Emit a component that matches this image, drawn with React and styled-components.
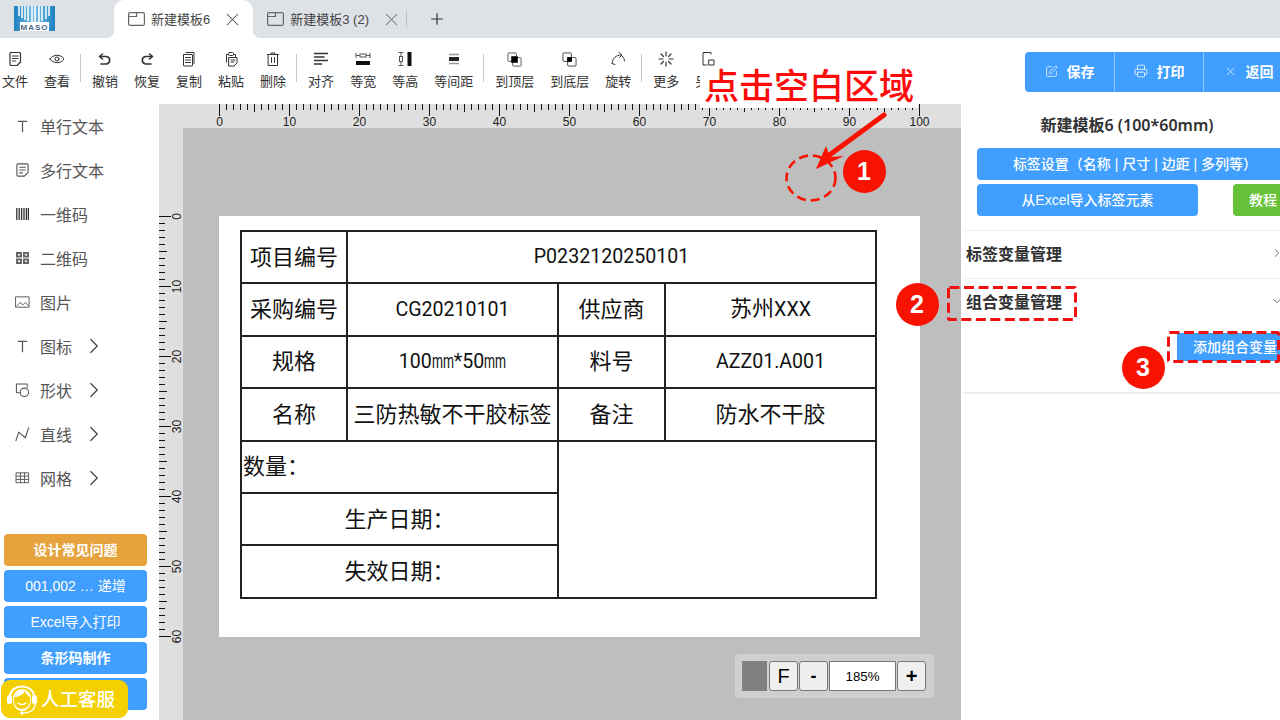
import React from 'react';
import styled, { createGlobalStyle } from 'styled-components';
import { SquarePen, Printer, X, Plus, ChevronRight, ChevronDown } from 'lucide-react';

const Global = createGlobalStyle`
  html, body { margin: 0; padding: 0; width: 1280px; height: 720px; overflow: hidden; background: #fff; }
  body { font-family: "Liberation Sans", "Noto Sans CJK SC", sans-serif; }
  * { box-sizing: border-box; }
`;

const Root = styled.div`
  position: relative; width: 1293px; height: 720px; display: flex; flex-direction: column; overflow: hidden; color: #333;
`;

/* ---------- tab bar ---------- */
const TabBar = styled.div`
  height: 38px; flex: none; background: #dee1e6; display: flex; align-items: stretch;
`;
const LogoBox = styled.div`
  width: 114px; flex: none; padding: 6px 0 0 14px;
`;
const Tab = styled.div`
  position: relative; display: flex; align-items: center; padding: 0 15px 0 14px; font-size: 13px; color: #444;
  background: ${p => (p.$active ? '#fff' : 'transparent')};
  border-radius: 10px 10px 0 0;
  ${p => p.$active && `
    &::before, &::after { content: ''; position: absolute; bottom: 0; width: 8px; height: 8px; }
    &::before { left: -8px; background: radial-gradient(circle at 0 0, transparent 8px, #fff 8.5px); }
    &::after { right: -8px; background: radial-gradient(circle at 100% 0, transparent 8px, #fff 8.5px); }
  `}
`;
const TabLabel = styled.span`
  margin: 0 17px 2px 6px; white-space: nowrap;
`;
const TabClose = styled.span`
  display: flex; width: 11px; justify-content: center; color: ${p => (p.$active ? '#555' : '#777')};
  & > svg { flex: none; }
`;
const TabDivider = styled.div`
  width: 1px; height: 16px; background: #b8bcc2; align-self: center; margin-left: -6px;
`;
const AddTab = styled.div`
  display: flex; align-items: center; margin-left: 21px; color: #333;
`;

/* ---------- toolbar ---------- */
const Toolbar = styled.div`
  height: 66px; flex: none; background: #fff; display: flex; align-items: flex-start; padding: 10px 0 0 2px; gap: 16px; position: relative;
`;
const ToolItem = styled.div`
  display: flex; flex-direction: column; align-items: center; font-size: 13px; line-height: 20px; color: #333; white-space: nowrap;
`;
const ToolIcon = styled.div`
  height: 24px; display: flex; align-items: center; justify-content: center; padding-bottom: 2px; color: #333;
`;
const ToolSep = styled.div`
  width: 1px; height: 28px; margin: 6px -5px 0 -6px; background: #c8c8c8; flex: none;
`;
const ActionGroup = styled.div`
  margin: 4px 0 0 auto; display: flex; height: 40px; border-radius: 4px; overflow: hidden; background: #409eff;
`;
const ActionButton = styled.div`
  width: 89px; display: flex; align-items: center; justify-content: center; gap: 9px; color: #fff; font-size: 14px; font-weight: 700; padding-bottom: 2px;
  & + & { border-left: 1px solid #8cc5ff; }
  &:last-child { width: 90px; }
`;

/* ---------- main ---------- */
const Main = styled.div`
  flex: 1; min-height: 0; display: flex;
`;
const Sidebar = styled.div`
  width: 159px; flex: none; background: #fff; display: flex; flex-direction: column; padding: 0 0 10px;
`;
const MenuItem = styled.div`
  height: 44px; flex: none; display: flex; align-items: center; padding-left: 15px; font-size: 16px; color: #555;
`;
const MenuIcon = styled.span`
  width: 15px; height: 16px; margin-right: 10px; display: flex; align-items: center; justify-content: center; color: #555;
`;
const MenuArrow = styled.span`
  display: flex; margin-left: 9px; color: #444;
`;
const SideButtons = styled.div`
  margin-top: auto; padding-left: 4px; display: flex; flex-direction: column; gap: 4px;
`;
const SideButton = styled.div`
  width: 143px; height: 32px; border-radius: 4px; display: flex; align-items: center; justify-content: center; color: #fff; font-size: 14px; padding-bottom: 2px;
  background: ${p => (p.$tone === 'orange' ? '#e6a23c' : '#409eff')};
  font-weight: ${p => (p.$bold ? 700 : 400)};
`;

const Workspace = styled.div`
  width: 802px; flex: none; position: relative; display: grid; grid-template-columns: 24px 1fr; grid-template-rows: 24px 1fr; background: #bebebe; overflow: hidden;
`;
const RulerCorner = styled.div` background: #dfdfdf; `;
const RulerBar = styled.div`
  background: #dfdfdf; overflow: hidden; display: flex;
`;
const Canvas = styled.div`
  padding: 88px 0 0 36px; overflow: hidden;
`;
const Label = styled.div`
  width: 701px; height: 421px; background: #fff; padding: 14px 0 0 21px;
`;
const LabelTable = styled.table`
  border-collapse: collapse; table-layout: fixed; width: 635px; color: #111;
  font-family: "Noto Sans CJK SC", sans-serif; font-size: 22px;
`;
const Cell = styled.td`
  border: 2px solid #222; height: 52.4px; padding: 0 0 5px; text-align: ${p => (p.$left ? 'left' : 'center')};
  padding-left: ${p => (p.$left ? '1px' : '0')}; white-space: nowrap; line-height: 1;
`;
const Mono = styled.span`
  font-family: "Roboto", sans-serif; font-size: 19.6px;
`;
const NarrowMm = styled.span`
  display: inline-block; width: 22px; transform: scaleX(0.64); transform-origin: left center; white-space: nowrap;
`;
const ZoomBar = styled.div`
  position: absolute; left: 576px; top: 550px; width: 199px; height: 44px; background: #cfcfcf; border-radius: 4px;
  display: flex; align-items: center; padding-left: 7px; gap: 1px;
`;
const Swatch = styled.div`
  width: 25px; height: 30px; background: #808080; margin-right: 1px;
`;
const ZoomBtn = styled.div`
  width: 29px; height: 30px; background: #efefef; border: 1px solid #767676; border-radius: 3px; color: #000;
  display: flex; align-items: center; justify-content: center; font-size: ${p => p.$size || 18}px; font-weight: ${p => (p.$bold ? 700 : 400)};
`;
const ZoomValue = styled.div`
  width: 67px; height: 30px; background: #fff; border: 1px solid #767676; color: #000; font-size: 13.3px;
  display: flex; align-items: center; justify-content: center;
`;

/* ---------- right panel ---------- */
const RightPanel = styled.div`
  flex: 1; min-width: 0; background: #fff; display: flex; flex-direction: column; font-family: "Noto Sans", "Noto Sans CJK SC", sans-serif;
`;
const PanelTitle = styled.div`
  height: 44px; flex: none; display: flex; align-items: center; justify-content: center; font-size: 16px; font-weight: 600; color: #303133; padding-bottom: 4px;
`;
const PanelButtons = styled.div`
  padding: 0 0 0 16px; display: flex; flex-direction: column; gap: 4px; margin-bottom: 14px;
`;
const PanelRow = styled.div`
  display: flex; justify-content: space-between;
`;
const PanelButton = styled.div`
  height: 32px; border-radius: 4px; display: flex; align-items: center; justify-content: center; color: #fff; font-size: 14px; padding-bottom: 2px;
  font-family: "Liberation Sans", "Noto Sans CJK SC", sans-serif; font-weight: 500;
  width: ${p => p.$w}px; background: ${p => (p.$tone === 'green' ? '#67c23a' : '#409eff')};
`;
const Section = styled.div`
  margin-left: 2px; height: 48px; border-top: 1px solid #ebeef5; display: flex; align-items: center; justify-content: space-between;
  padding: 0 9px 3px 3px; font-size: 16px; font-weight: 700; color: #303133;
`;
const SectionBody = styled.div`
  margin-left: 2px; height: 68px; border-bottom: 2px solid #ebeef5; display: flex; justify-content: flex-end; padding-top: 7px;
`;
const AddButton = styled.div`
  width: 116px; height: 28px; background: #409eff; color: #fff; font-size: 14px; font-weight: 500; padding: 0 0 2px 16px; display: flex; align-items: center;
`;

/* ---------- annotations ---------- */
const Callout = styled.div`
  position: absolute; left: 700px; top: 66px; width: 218px; height: 42px; background: #fff; color: #ff0a0a;
  font-family: "Noto Sans CJK SC", sans-serif; font-size: 35px; font-weight: 500; line-height: 36px; padding-left: 4px; white-space: nowrap;
`;
const Step = styled.div`
  position: absolute; left: ${p => p.$x - 21.5}px; top: ${p => p.$y - 21.5}px; width: 43px; height: 43px; border-radius: 50%;
  background: #f81200; color: #fff; font-size: 25px; font-weight: 700; display: flex; align-items: center; justify-content: center;
`;
const DashSvg = styled.svg`
  position: absolute; left: ${p => p.$x}px; top: ${p => p.$y}px; overflow: visible;
`;
const AnnotationArt = styled.svg`
  position: absolute; left: 780px; top: 105px; overflow: visible;
`;
const ServiceBadge = styled.div`
  position: absolute; left: 1px; top: 680px; width: 127px; height: 38px; background: #f5d000; border-radius: 9px;
  display: flex; align-items: center; padding: 0 0 2px 2px; gap: 0; color: #fff; font-size: 18.5px; font-family: "Noto Sans CJK SC", sans-serif; font-weight: 500;
`;

const DashFrame = ({ x, y, w, h }) => (
  <DashSvg $x={x} $y={y} width={w} height={h}>
    <rect x="1.500" y="1.500" width={w - 3} height={h - 3} rx="1" fill="none" stroke="#f01010" strokeWidth="3" strokeDasharray="10 4.500" />
  </DashSvg>
);

/* ---------- drawings ---------- */
const Ico = ({ children, size = 16, view = 16, sw = 1.2 }) => (
  <svg width={size} height={size} viewBox={`0 0 ${view} ${view}`} fill="none" stroke="currentColor" strokeWidth={sw} strokeLinecap="round" strokeLinejoin="round">{children}</svg>
);
const I = {
  file: <Ico><path d="M3 2.500q0-1 1-1h8.500q1 0 1 1V11l-3.500 3.500H4q-1 0-1-1z" /><path d="M5.500 5h5.500M5.500 7.500h5.500M5.500 10h3" /></Ico>,
  eye: <Ico><path d="M1 8c3-5 11-5 14 0-3 5-11 5-14 0z" strokeWidth="1" /><circle cx="8" cy="8" r="2" strokeWidth="1" /></Ico>,
  undo: <Ico sw={1.6}><path d="M5.500 3 2.500 5.500 5.500 8" /><path d="M3 5.500h6.500a3.800 3.800 0 0 1 0 7.500H4" /></Ico>,
  redo: <Ico sw={1.6}><path d="M10.500 3l3 2.500-3 2.500" /><path d="M13 5.500H6.500a3.800 3.800 0 0 0 0 7.500H12" /></Ico>,
  copy: <Ico sw={1}><path d="M5 1.500h8v11" /><rect x="2.500" y="3.500" width="9" height="11.500" rx=".5" /><path d="M4.500 6.500h5M4.500 9h5M4.500 11.500h5" /></Ico>,
  paste: <Ico sw={1}><path d="M3.500 11V3.500h2M10.500 3.500h2v2" /><rect x="5.500" y="1.500" width="5" height="3" rx="1" /><path d="M6 6.500h8V12l-3 3H6z" /><path d="M8 9h4M8 11h3" /></Ico>,
  trash: <Ico sw={1}><path d="M2.500 3.500h11M6 3.500V2h4v1.500" /><path d="M3.500 3.500h9V14.500h-9z" /><path d="M6.500 6.500v5M9.500 6.500v5" /></Ico>,
  align: <Ico sw={1.5}><path d="M1.500 2.500h13M1.500 6h9.500M1.500 9.500h13M1.500 13h7" /></Ico>,
  sameW: <svg width="16" height="16" viewBox="0 0 16 16"><rect x="1" y="10" width="14" height="4" fill="#111" /><path d="M1 2v5M15 2v5M1 4.500h4M11 4.500h4" stroke="#555" fill="none" /><rect x="5" y="3" width="6" height="3" fill="none" stroke="#555" /></svg>,
  sameH: <svg width="16" height="16" viewBox="0 0 16 16"><rect x="10.500" y="1" width="4" height="14" fill="#111" /><path d="M1.500 1.500h5M1.500 14.500h5M4 1.500v4M4 10.500v4" stroke="#555" fill="none" /><rect x="2.500" y="5.500" width="3" height="5" fill="none" stroke="#555" /></svg>,
  spacing: <svg width="16" height="16" viewBox="0 0 16 16"><rect x="3" y="6" width="10" height="4" fill="#222" /><path d="M3 3.500h10M3 12.500h10" stroke="#999" strokeWidth="1.500" /></svg>,
  top: <svg width="15" height="15" viewBox="0 0 16 16" fill="none"><rect x="1" y="1" width="9" height="9" rx="1" stroke="#555" /><rect x="6" y="6" width="9" height="9" rx="1" stroke="#555" /><rect x="4.500" y="4.500" width="7" height="7" fill="#000" /></svg>,
  bottom: <svg width="15" height="15" viewBox="0 0 16 16" fill="none"><rect x="1" y="1" width="9" height="9" rx="1" stroke="#444" /><rect x="6" y="6" width="9" height="9" rx="1" stroke="#444" /><rect x="5.500" y="5.500" width="5" height="5" fill="#000" /></svg>,
  rotate: <Ico sw={1}><path d="M2 12C3 7 6 4 11 4" /><path d="M9 1.500 12 4 9.500 6.500" /><path d="M12 5c1.500 1.500 2.500 3 2.500 5" /><path d="M2 12.500l3 1" /></Ico>,
  more: <Ico sw={1.200}><path d="M8 1v4M8 11v4M1 8h4M11 8h4M3 3l2.500 2.500M10.500 10.500 13 13M13 3l-2.500 2.500M5.500 10.500 3 13" /></Ico>,
  saveAs: <Ico sw={1}><path d="M11 3V1.500H3V14h4" /><path d="M9 9h5v5H9z" /></Ico>,
  tab: <svg width="17" height="14" viewBox="0 0 17 14" fill="none" stroke="#666" strokeWidth="1.200"><rect x=".6" y=".6" width="15.800" height="12.800" rx="1.500" /><path d="M.6 4.500H8.500V.6" /></svg>,
  text: <Ico sw={1.300}><path d="M3.500 3h9M8 3v11" /></Ico>,
  note: <Ico sw={1.200}><path d="M2 3q0-1.500 1.500-1.500h9Q14 1.500 14 3v7.500L10 14.500H3.500Q2 14.500 2 13z" /><path d="M5 5h6M5 8h6M5 11h3" /></Ico>,
  barcode: <svg width="13" height="12" viewBox="0 0 13 12"><path d="M.8 0v12M3.200 0v12M5.600 0v12M8 0v12M10.400 0v12M12.400 0v12" stroke="#333" strokeWidth="1.300" /></svg>,
  qr: <svg width="13" height="12" viewBox="0 0 13 12" fill="#666"><rect x="0" y="0" width="6" height="5.500" /><rect x="7" y="0" width="6" height="5.500" /><rect x="0" y="6.500" width="6" height="5.500" /><rect x="7" y="6.500" width="6" height="5.500" /><rect x="2" y="2" width="2" height="1.500" fill="#fff" /><rect x="9" y="2" width="2" height="1.500" fill="#fff" /><rect x="2" y="8.500" width="2" height="1.500" fill="#fff" /><rect x="9" y="8.500" width="2" height="1.500" fill="#fff" /></svg>,
  image: <Ico sw={1}><rect x="1" y="2.500" width="14" height="11" /><path d="M2 12l3.500-3.500 3 2.500 2.500-2.500 3 3" /></Ico>,
  shape: <Ico sw={1.100}><path d="M6 11H1.500V1.500H13V5" /><circle cx="10" cy="10.500" r="4.500" /></Ico>,
  line: <Ico sw={1.200}><path d="M1 15 4 6l7 6 3.500-10.500" /></Ico>,
  grid: <Ico sw={1}><rect x="1.500" y="2.500" width="13" height="10.500" /><path d="M1.500 6h13M1.500 9.500h13M5.800 2.500V13M10.200 2.500V13" /></Ico>,
};

const HRuler = () => {
  const ticks = [];
  for (let i = 0; i <= 100; i++) {
    const x = 36.5 + i * 7;
    const len = i % 10 === 0 ? 12 : i % 5 === 0 ? 8 : 6;
    ticks.push(<line key={i} x1={x} x2={x} y1={0} y2={len} stroke="#111" />);
    if (i % 10 === 0) ticks.push(<text key={`t${i}`} x={x} y={22} fontSize="12" fill="#222" textAnchor="middle" fontFamily="Liberation Sans">{i}</text>);
  }
  return <svg width="778" height="24">{ticks}</svg>;
};
const VRuler = () => {
  const ticks = [];
  for (let i = 0; i <= 60; i++) {
    const y = 88.5 + i * 7;
    const len = i % 10 === 0 ? 12 : i % 5 === 0 ? 8 : 6;
    ticks.push(<line key={i} y1={y} y2={y} x1={0} x2={len} stroke="#111" />);
    if (i % 10 === 0) ticks.push(<text key={`t${i}`} x={0} y={0} transform={`translate(22 ${y}) rotate(-90)`} fontSize="12" fill="#222" textAnchor="middle" fontFamily="Liberation Sans">{i}</text>);
  }
  return <svg width="24" height="592">{ticks}</svg>;
};

const tools = [
  ['文件', I.file], ['查看', I.eye], '|', ['撤销', I.undo], ['恢复', I.redo], ['复制', I.copy], ['粘贴', I.paste], ['删除', I.trash], '|',
  ['对齐', I.align], ['等宽', I.sameW], ['等高', I.sameH], ['等间距', I.spacing], '|',
  ['到顶层', I.top], ['到底层', I.bottom], ['旋转', I.rotate], '|', ['更多', I.more], ['另存', I.saveAs],
];
const menu = [
  ['单行文本', I.text], ['多行文本', I.note], ['一维码', I.barcode], ['二维码', I.qr], ['图片', I.image],
  ['图标', I.text, true], ['形状', I.shape, true], ['直线', I.line, true], ['网格', I.grid, true],
];

export default function App() {
  return (
    <Root>
      <Global />
      <TabBar>
        <LogoBox>
          <svg width="42" height="26" viewBox="0 0 42 26">
            <defs>
              <linearGradient id="lg" x1="0" x2="1"><stop offset="0" stopColor="#1e7fc0" /><stop offset=".5" stopColor="#7cc0e8" /><stop offset="1" stopColor="#1e7fc0" /></linearGradient>
            </defs>
            <rect width="41" height="25" fill="url(#lg)" />
            <path d="M5 0v10M8 0v12M11 0v14M14 0v15M18 0v16M21 0v17M25 0v16M28 0v15M32 0v13M35 0v10" stroke="#fff" strokeWidth="1.500" />
            <rect x="6" y="16" width="29" height="9" fill="#fff" />
            <text x="20.500" y="24" fontSize="8" fontWeight="700" letterSpacing="1" textAnchor="middle" fill="#4a6a86" fontFamily="Liberation Sans">MASO</text>
          </svg>
        </LogoBox>
        <Tab $active>{I.tab}<TabLabel>新建模板6</TabLabel><TabClose $active><X size={21} strokeWidth={1.2} /></TabClose></Tab>
        <Tab>{I.tab}<TabLabel>新建模板3 (2)</TabLabel><TabClose><X size={21} strokeWidth={1.2} /></TabClose></Tab>
        <TabDivider />
        <AddTab><Plus size={18} strokeWidth={1.6} /></AddTab>
      </TabBar>

      <Toolbar>
        {tools.map((t, i) => t === '|' ? <ToolSep key={i} /> : (
          <ToolItem key={i}><ToolIcon>{t[1]}</ToolIcon>{t[0]}</ToolItem>
        ))}
        <ActionGroup>
          <ActionButton><SquarePen size={13} strokeWidth={1.3} />保存</ActionButton>
          <ActionButton><Printer size={14} strokeWidth={1.3} />打印</ActionButton>
          <ActionButton><X size={13} strokeWidth={1.3} />返回</ActionButton>
        </ActionGroup>
      </Toolbar>

      <Main>
        <Sidebar>
          {menu.map(([label, icon, arrow]) => (
            <MenuItem key={label}>
              <MenuIcon>{icon}</MenuIcon>{label}
              {arrow && <MenuArrow><ChevronRight size={26} strokeWidth={1.1} /></MenuArrow>}
            </MenuItem>
          ))}
          <SideButtons>
            <SideButton $tone="orange" $bold>设计常见问题</SideButton>
            <SideButton>001,002 … 递增</SideButton>
            <SideButton>Excel导入打印</SideButton>
            <SideButton $bold>条形码制作</SideButton>
            <SideButton />
          </SideButtons>
        </Sidebar>

        <Workspace>
          <RulerCorner />
          <RulerBar><HRuler /></RulerBar>
          <RulerBar><VRuler /></RulerBar>
          <Canvas>
            <Label>
              <LabelTable>
                <colgroup><col width="106" /><col width="211" /><col width="107" /><col width="211" /></colgroup>
                <tbody>
                  <tr><Cell>项目编号</Cell><Cell colSpan={3}><Mono>P0232120250101</Mono></Cell></tr>
                  <tr><Cell>采购编号</Cell><Cell><Mono>CG20210101</Mono></Cell><Cell>供应商</Cell><Cell>苏州<Mono>XXX</Mono></Cell></tr>
                  <tr><Cell>规格</Cell><Cell><Mono>100<NarrowMm>mm</NarrowMm>*50<NarrowMm>mm</NarrowMm></Mono></Cell><Cell>料号</Cell><Cell><Mono>AZZ01.A001</Mono></Cell></tr>
                  <tr><Cell>名称</Cell><Cell>三防热敏不干胶标签</Cell><Cell>备注</Cell><Cell>防水不干胶</Cell></tr>
                  <tr><Cell colSpan={2} $left>数量：</Cell><Cell colSpan={2} rowSpan={3} /></tr>
                  <tr><Cell colSpan={2}>生产日期：</Cell></tr>
                  <tr><Cell colSpan={2}>失效日期：</Cell></tr>
                </tbody>
              </LabelTable>
            </Label>
          </Canvas>
          <ZoomBar>
            <Swatch />
            <ZoomBtn $size={20}>F</ZoomBtn>
            <ZoomBtn $size={18} $bold>-</ZoomBtn>
            <ZoomValue>185%</ZoomValue>
            <ZoomBtn $size={20} $bold>+</ZoomBtn>
          </ZoomBar>
        </Workspace>

        <RightPanel>
          <PanelTitle>新建模板6 (100*60mm)</PanelTitle>
          <PanelButtons>
            <PanelButton $w={316}>标签设置（名称 | 尺寸 | 边距 | 多列等）</PanelButton>
            <PanelRow>
              <PanelButton $w={221}>从Excel导入标签元素</PanelButton>
              <PanelButton $w={60} $tone="green">教程</PanelButton>
            </PanelRow>
          </PanelButtons>
          <Section>标签变量管理<ChevronRight size={14} strokeWidth={1.2} /></Section>
          <Section>组合变量管理<ChevronDown size={14} strokeWidth={1.2} /></Section>
          <SectionBody><AddButton>添加组合变量</AddButton></SectionBody>
        </RightPanel>
      </Main>

      <Callout>点击空白区域</Callout>
      <AnnotationArt width="120" height="100" viewBox="0 0 120 100">
        <path d="M104 10 L44 54" stroke="#f81200" strokeWidth="5" strokeLinecap="round" />
        <path d="M36 64 L46 41 L50 52 L64 51 Z" fill="#f81200" />
        <ellipse cx="31" cy="73" rx="24.500" ry="22.500" fill="none" stroke="#f81200" strokeWidth="2.600" strokeDasharray="9 5" />
      </AnnotationArt>
      <Step $x={864} $y={171}>1</Step>
      <Step $x={917} $y={304}>2</Step>
      <Step $x={1143} $y={367}>3</Step>
      <DashFrame x={947} y={286} w={130} h={35} />
      <DashFrame x={1167} y={331} w={113} h={32} />

      <ServiceBadge>
        <svg width="38" height="36" viewBox="0 0 38 36" fill="none" stroke="#fff" strokeLinecap="round">
          <path d="M7 17C7 3 31 3 31 17" strokeWidth="2" />
          <path d="M10 19c0-13 18-13 18 0 0 8-4 12-9 12s-9-4-9-12z" fill="#fff" stroke="none" />
          <path d="M11 17c4 0 9-2 11-6 1 3 3 5 5 6v3c0 6-4 9-8 9s-8-3-8-9z" fill="#f5d000" stroke="none" />
          <path d="M15 23c2 2 6 2 8 0" strokeWidth="1.300" />
          <rect x="4" y="15" width="5" height="9" rx="2.500" fill="#fff" stroke="none" />
          <rect x="29" y="15" width="5" height="9" rx="2.500" fill="#fff" stroke="none" />
          <path d="M32 24c0 6-5 9-11 9" strokeWidth="1.500" />
          <circle cx="19" cy="33" r="1.800" fill="#fff" stroke="none" />
        </svg>
        人工客服
      </ServiceBadge>
    </Root>
  );
}
